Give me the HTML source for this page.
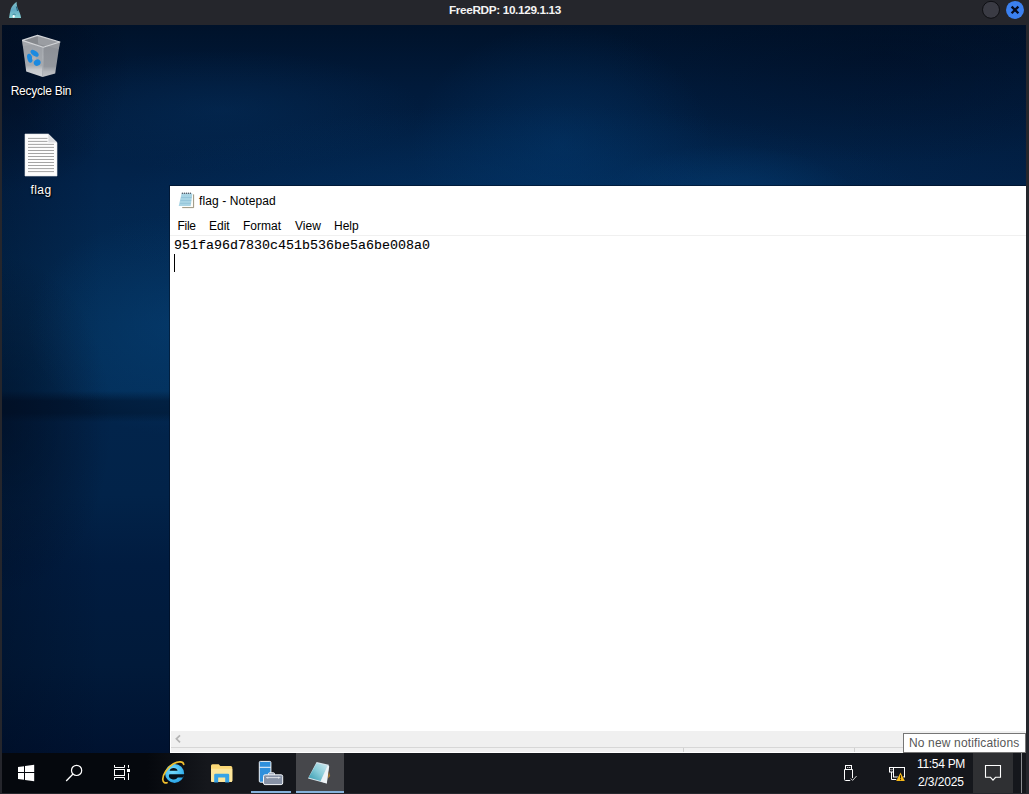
<!DOCTYPE html>
<html>
<head>
<meta charset="utf-8">
<title>FreeRDP: 10.129.1.13</title>
<style>
*{box-sizing:border-box;margin:0;padding:0}
html,body{width:1029px;height:794px;overflow:hidden;background:#25262c}
body{font-family:"Liberation Sans",sans-serif;font-size:12px;color:#fff;position:relative}
#titlebar{position:absolute;left:0;top:0;width:1029px;height:25px;background:#25262c}
#ttl{position:absolute;left:0;width:1010px;top:3px;text-align:center;font-weight:bold;font-size:11.8px;letter-spacing:-0.37px;line-height:14px;color:#f4f4f4}
#screen{position:absolute;left:2px;top:25px;width:1024px;height:768px;overflow:hidden;background:#001a3a}
#wall{position:absolute;left:0;top:0;width:1024px;height:768px;background:
radial-gradient(ellipse 420px 110px at 520px 190px,rgba(3,60,116,.4),rgba(3,60,116,0) 100%),
radial-gradient(ellipse 150px 120px at 560px 120px,rgba(3,60,116,.4),rgba(3,60,116,0) 100%),
radial-gradient(ellipse 130px 55px at 725px 175px,rgba(6,76,136,.38),rgba(6,76,136,0) 100%),
radial-gradient(ellipse 150px 110px at 175px 300px,rgba(6,64,118,.55),rgba(6,64,118,0) 100%),
radial-gradient(ellipse 200px 60px at 220px 85px,rgba(6,52,100,.35),rgba(6,52,100,0) 100%),
radial-gradient(ellipse 110px 170px at 0px 400px,rgba(0,10,28,.5),rgba(0,10,28,0) 100%),
radial-gradient(ellipse 130px 130px at 0px 40px,rgba(0,10,28,.55),rgba(0,10,28,0) 100%),
radial-gradient(ellipse 280px 110px at 880px 30px,rgba(0,12,32,.4),rgba(0,12,32,0) 100%),
linear-gradient(to right,rgba(0,10,28,.3) 0,rgba(0,10,28,0) 100px),
linear-gradient(to left,rgba(0,14,40,.12) 0,rgba(0,14,40,0) 200px),
linear-gradient(to bottom,#00122a 0,#011a3a 60px,#02244c 160px,#032d56 300px,#032f5a 366px,#011a38 376px,#011a38 388px,#02244b 397px,#022349 470px,#011c40 540px,#011a3a 640px,#001230 728px)}
.dicon{position:absolute;width:80px;text-align:center;font-size:12px;line-height:14px;color:#fff;letter-spacing:-0.25px;text-shadow:0 1px 2px rgba(0,0,0,.9),1px 1px 1px rgba(0,0,0,.7)}
#np{position:absolute;left:168px;top:161px;width:860px;height:567px;background:#fff;box-shadow:0 0 0 1px rgba(0,8,24,.45)}
#np .t{position:absolute;left:29px;top:8px;font-size:12px;line-height:14px;color:#000;white-space:nowrap;letter-spacing:.1px}
#np .menu{position:absolute;top:33px;font-size:12px;line-height:14px;color:#000}
#np .sep{position:absolute;left:0;top:49px;width:856px;height:1px;background:#f0f0f0}
#np pre{position:absolute;left:4px;top:51px;font-family:"Liberation Mono",monospace;font-size:13.33px;line-height:18px;color:#000;-webkit-text-stroke:0.1px #000}
#caret{position:absolute;left:4px;top:68px;width:1px;height:18px;background:#000}
#hs{position:absolute;left:1px;top:545px;width:860px;height:16px;background:#f0f0f0}
#sl{position:absolute;left:1px;top:561px;width:860px;height:1px;background:#d7d7d7}
#sb{position:absolute;left:1px;top:562px;width:860px;height:4px;background:#f0f0f0}
.dv{position:absolute;top:562px;width:1px;height:4px;background:#d0d0d0}
#task{position:absolute;left:0;top:728px;width:1024px;height:40px;background:linear-gradient(to right,#05080d 0,#05080d 145px,#15171c 205px,#15171c 100%)}
#tip{position:absolute;left:901px;top:708px;width:123px;height:20px;letter-spacing:.15px;background:#fff;border:1px solid #767676;color:#575757;font-size:12px;line-height:14px;padding:2px 0 0 5px;white-space:nowrap}
svg{position:absolute;overflow:visible}
.clk{position:absolute;left:908px;width:62px;text-align:center;font-size:12px;line-height:14px;color:#fff;letter-spacing:-0.3px;white-space:nowrap}
</style>
</head>
<body>
<div id="titlebar">
  <div id="ttl">FreeRDP: 10.129.1.13</div>
  <svg style="left:0;top:0" width="30" height="22" viewBox="0 0 30 22"><defs><linearGradient id="fin" x1="0" y1="0" x2="0" y2="1"><stop offset="0" stop-color="#7fc0c9"/><stop offset=".5" stop-color="#62a9c4"/><stop offset="1" stop-color="#84d0d4"/></linearGradient></defs><path d="M16.6 1.700 C14.200 3.400 11.600 6.400 10.800 9 C10 12 9.400 15 9.100 17.900 L21.100 17.900 C20.600 14.500 19.400 12 18.200 9.600 C17.400 8 16.600 5 16.600 1.700 Z" fill="url(#fin)"/><path d="M16.300 6.500 q.8 2.500 1.200 4.500" stroke="#1d5f78" stroke-width="1" fill="none"/><ellipse cx="13.700" cy="16.400" rx="1.100" ry="1.400" fill="#fff"/><path d="M12.600 14.600 q1.600 -1 3 0" stroke="#2d6f88" stroke-width=".7" fill="none"/></svg>
  <svg style="left:981px;top:0" width="48" height="22" viewBox="0 0 48 22"><circle cx="10" cy="9.800" r="8.500" fill="#3a3b44" stroke="#0e0f13" stroke-width="1"/><circle cx="34" cy="9.900" r="9" fill="#3b80ef"/><path d="M30.600 6.600 L37.400 13.300 M37.400 6.600 L30.600 13.300" stroke="#060b1e" stroke-width="2.300" stroke-linecap="butt"/></svg>
</div>
<div id="screen">
  <div id="wall"></div>

  <svg style="left:0;top:0" width="100" height="180" viewBox="2 25 100 180">
    <defs>
      <linearGradient id="rbL" x1="0" y1="0" x2="0" y2="1"><stop offset="0" stop-color="#a4a7ac"/><stop offset=".68" stop-color="#b0b3b7"/><stop offset=".8" stop-color="#d2d4d7"/><stop offset="1" stop-color="#dcdddf"/></linearGradient>
      <linearGradient id="rbR" x1="0" y1="0" x2="0" y2="1"><stop offset="0" stop-color="#94979c"/><stop offset=".7" stop-color="#9da0a5"/><stop offset=".85" stop-color="#c0c2c5"/><stop offset="1" stop-color="#cccdd0"/></linearGradient>
    </defs>
    <!-- recycle bin -->
    <polygon points="22.100,40.400 37.500,35.400 59.900,42 43.200,47.300" fill="#8d9095"/>
    <polygon points="37.500,35.400 59.900,42 58.800,49 38.200,44" fill="#9a9da2"/>
    <polygon points="22.100,40.400 37.500,35.400 38.200,44 23,46" fill="#85888d"/>
    <polygon points="22.100,40.400 43.200,47.300 42.600,76.900 26.200,71.600" fill="url(#rbL)" opacity=".94"/>
    <polygon points="43.200,47.300 59.900,42 55.200,73.500 42.600,76.900" fill="url(#rbR)" opacity=".94"/>
    <path d="M43.200 47.300 L42.600 76.900" stroke="#b9bcc0" stroke-width=".8"/>
    <polyline points="22.100,40.400 37.500,35.400 59.900,42 43.200,47.300 22.100,40.400" fill="none" stroke="#d3d5d8" stroke-width="1.200" stroke-linejoin="round"/>
    <ellipse cx="29.800" cy="58.200" rx="2.500" ry="4.600" transform="rotate(-14 29.800 58.200)" fill="#1b8ae0"/>
    <ellipse cx="34.600" cy="53.200" rx="4.600" ry="2.500" transform="rotate(36 34.600 53.200)" fill="#1b8ae0"/>
    <ellipse cx="37.200" cy="62.600" rx="3.500" ry="3.100" transform="rotate(-30 37.200 62.600)" fill="#1b8ae0"/>
    <circle cx="34" cy="58.300" r="2" fill="#aeb1b6"/>
    <!-- flag file -->
    <polygon points="25,134 48.3,134 57,142.6 57,176 25,176" fill="#fdfdfd" stroke="#e3e6ea" stroke-width="0.6"/>
    <polygon points="48.3,134 57,142.6 48.3,142.6" fill="#dcdde0"/>
    <g stroke="#a4a4a4" stroke-width="1">
      <path d="M28 138.4H47.5M28 141.4H47.5M28 144.4H54M28 147.4H54M28 150.5H54M28 153.5H54M28 156.5H54M28 159.5H54M28 162.5H54M28 165.5H54M28 168.6H54M28 171.6H54"/>
    </g>
  </svg>
  <div class="dicon" style="left:-1px;top:59px">Recycle Bin</div>
  <div class="dicon" style="left:-1px;top:158px;letter-spacing:.45px">flag</div>
  <div id="np">

    <svg style="left:8px;top:5px" width="18" height="18" viewBox="178 191 18 18">
      <polygon points="182.4,194 193.9,194 193.9,208.1 182.4,208.1" fill="#fcfcf8"/>
      <path d="M182.2 207.6H193.6V194.4" fill="none" stroke="#8f8872" stroke-width="0.9"/>
      <polygon points="181.6,193.6 192.4,193.6 190.7,205.9 178.7,205.9" fill="#a9d4e4"/>
      <path d="M181 197.5H191.6M180.5 200.5H191.2M180 203.4H190.8" stroke="#93c3d8" stroke-width="0.9"/>
      <g fill="#47525e"><circle cx="182.4" cy="193.3" r=".75"/><circle cx="184.4" cy="193.3" r=".75"/><circle cx="186.4" cy="193.3" r=".75"/><circle cx="188.4" cy="193.3" r=".75"/><circle cx="190.4" cy="193.3" r=".75"/></g>
    </svg>
    <svg style="left:4px;top:549px;z-index:3" width="8" height="9" viewBox="0 0 8 9"><path d="M6 0.300 L2.400 3.800 L6 7.300" fill="none" stroke="#b4b4b4" stroke-width="1.700"/></svg>
    <div class="t">flag - Notepad</div>
    <div class="menu" style="left:7.500px;letter-spacing:-0.300px">File</div>
    <div class="menu" style="left:39px">Edit</div>
    <div class="menu" style="left:73px">Format</div>
    <div class="menu" style="left:125px">View</div>
    <div class="menu" style="left:164px">Help</div>
    <div class="sep"></div>
    <pre>951fa96d7830c451b536be5a6be008a0</pre>
    <div id="caret"></div>
    <div id="hs"></div><div id="sl"></div><div id="sb"></div><div class="dv" style="left:513px"></div><div class="dv" style="left:684px"></div>
  </div>
  <div id="task">
    <div style="position:absolute;left:294px;top:0;width:48px;height:40px;background:#46474b"></div>
    <div style="position:absolute;left:294px;top:38px;width:48px;height:2px;background:#86b3dc"></div>
    <div style="position:absolute;left:249px;top:38px;width:40px;height:2px;background:#86b3dc"></div>
    <div style="position:absolute;left:971px;top:0;width:40px;height:40px;background:#2f3033"></div>
    <div style="position:absolute;left:1019px;top:0;width:1px;height:40px;background:#8a8c90"></div>
    <div class="clk" style="top:4px">11:54 PM</div>
    <div class="clk" style="top:22px;letter-spacing:-0.1px">2/3/2025</div>
    <svg style="left:0;top:0" width="1024" height="40" viewBox="2 753 1024 40">
      <!-- start -->
      <g fill="#fff">
        <polygon points="18,767.100 24,766.300 24,772 18,772"/>
        <polygon points="25,766.100 34.200,764.800 34.200,772 25,772"/>
        <polygon points="18,773 24,773 24,779.700 18,778.900"/>
        <polygon points="25,773 34.200,773 34.200,781.300 25,779.900"/>
      </g>
      <!-- search -->
      <circle cx="76.6" cy="770.4" r="5.1" fill="none" stroke="#fff" stroke-width="1.2"/>
      <path d="M73 774 L66.2 781" stroke="#fff" stroke-width="1.3"/>
      <!-- task view -->
      <g fill="none" stroke="#fff" stroke-width="1">
        <rect x="114.500" y="769.500" width="10" height="6"/>
        <path d="M114.500 765v2.500h10v-2.500M114.500 780v-2.500h10v2.500"/>
        <path d="M128.500 765v2.800M128.500 773.200v6.800"/>
      </g>
      <rect x="127" y="769" width="3" height="3" fill="#fff"/>
      <!-- IE -->
      <g>
        <circle cx="174.600" cy="773.400" r="9.500" fill="url(#ieg)"/>
        <path d="M169.600 770.700 a4.100 3.300 0 0 1 8 0z" fill="#051019"/>
        <path d="M169.400 774.300 h14.800 q-.2 1.800 -1 3.200 h-5.400 a4.200 3 0 0 1 -8.400 -3.200z" fill="#051019"/>
        <path d="M183.700 764.300 C183.200 761.400 178.600 760.900 173.400 763.800 C167 767.600 162.400 775 162.800 779.700 C163.100 782.500 165 783.300 167 782.700" fill="none" stroke="#f0bf2e" stroke-width="1.700" stroke-linecap="round"/>
      </g>
      <!-- explorer -->
      <path d="M211 765.800 q0-1.500 1.500-1.500 h6.200 l1.600 1.600 h10.500 q1.500 0 1.500 1.500 v13 q0 1.500 -1.500 1.500 h-18.300 q-1.500 0 -1.500 -1.500z" fill="#fbd876"/>
      <path d="M211 768.800 h21.300 v11.600 q0 1.500 -1.500 1.500 h-18.300 q-1.500 0 -1.500 -1.500z" fill="#fde69b"/>
      <path d="M214.200 782.400 v-7.400 q0-1.200 1.200-1.200 h12.600 q1.200 0 1.200 1.200 v7.400 h-4 v-4.800 h-7 v4.800z" fill="#37a3e6"/>
      <!-- server manager -->
      <rect x="259.300" y="761.400" width="11.600" height="20.800" rx="1" fill="#2f90dc" stroke="#f2f6fa" stroke-width="1"/>
      <path d="M259.300 767.300h11.600" stroke="#f2f6fa" stroke-width="1"/>
      <path d="M268.500 775 v-1.200 q0-1 1-1 h4 q1 0 1 1 v1.200" fill="#8792a6" stroke="#f2f6fa" stroke-width="1"/>
      <rect x="263.500" y="774.800" width="19.200" height="9.800" rx="1.600" fill="#8792a6" stroke="#f2f6fa" stroke-width="1"/>
      <path d="M266 777.600 h14.400 M267.800 776.800 v1.800 M278.600 776.800 v1.800" stroke="#e4e8ee" stroke-width=".9" fill="none"/>
      <!-- notepad -->
      <polygon points="316.600,762 328.800,764.800 326.600,783.400 308,778.400" fill="#d7e3ea"/>
      <polygon points="316.600,763.200 327.600,765.600 320.600,781 308.600,777.600" fill="url(#npg)"/>
      <polygon points="327.800,765.600 329.200,766.200 326.800,783.400 320.800,781.400" fill="#eef3f6"/>
      <polygon points="328.800,771.500 330.200,776 327.900,778.500" fill="#a87a35"/>
      <!-- usb -->
      <g fill="none" stroke="#fff" stroke-width="1">
        <rect x="845.500" y="765.500" width="6" height="4"/>
        <path d="M844.500 769.500 h8 v10 q0 1 -1 1 h-6 q-1 0 -1 -1z"/>
      </g>
      <path d="M850.300 778.300 l2.300 2.300 l4.600 -5" fill="none" stroke="#15171c" stroke-width="3.200"/>
      <path d="M850.800 778.600 l1.800 1.800 l4 -4.400" fill="none" stroke="#d0d0d0" stroke-width="1"/>
      <rect x="847.300" y="767" width="1" height="1" fill="#fff"/><rect x="849.200" y="767" width="1" height="1" fill="#fff"/>
      <!-- network -->
      <g fill="none" stroke="#fff" stroke-width="1">
        <rect x="893.500" y="767.500" width="11" height="9.500"/>
        <rect x="889.500" y="767.500" width="4" height="4.500" fill="#15171c"/>
        <path d="M891.500 772 v7.500 h5"/>
        <path d="M890.600 769.200 l.9 1 l.9 -1" stroke-width=".8"/>
      </g>
      <polygon points="900.500,771.600 905.200,781 895.800,781" fill="#15171c"/>
      <polygon points="900.500,772.400 904.800,781 896.200,781" fill="#f6b91a"/>
      <path d="M900.500 775.200v3.200" stroke="#3a2a00" stroke-width="1"/><rect x="900" y="779.100" width="1" height="1" fill="#3a2a00"/>
      <!-- action center -->
      <path d="M985.500 765.500 h15 v11.800 h-5 l-2.500 2.900 l-2.500 -2.900 h-5z" fill="none" stroke="#fff" stroke-width="1.100"/>
      <defs>
        <radialGradient id="ieg" cx=".4" cy=".35" r=".8"><stop offset="0" stop-color="#7adcfb"/><stop offset=".6" stop-color="#3fb9f0"/><stop offset="1" stop-color="#1b8fdc"/></radialGradient>
        <linearGradient id="npg" x1="0" y1="1" x2="1" y2="0"><stop offset="0" stop-color="#2f97ad"/><stop offset=".5" stop-color="#86cbd8"/><stop offset="1" stop-color="#cfe9ef"/></linearGradient>
      </defs>
    </svg>
  </div>
  <div id="tip">No new notifications</div>
</div>
</body>
</html>
